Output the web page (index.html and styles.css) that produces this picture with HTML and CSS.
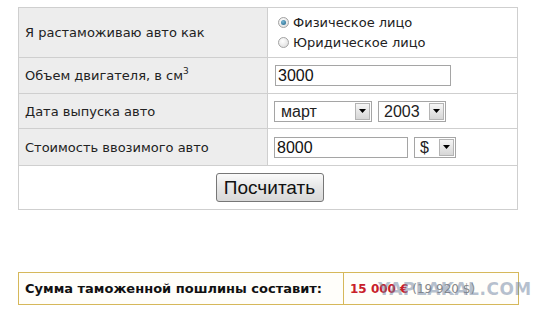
FILE: index.html
```html
<!DOCTYPE html>
<html lang="ru">
<head>
<meta charset="utf-8">
<link rel="stylesheet" href="styles.css">
</head>
<body>
<div class="page">
  <table class="calc">
    <tr class="r1">
      <td class="lbl">Я растаможиваю авто как</td>
      <td class="val">
        <div class="radio-row"><span class="radio on"></span><span>Физическое лицо</span></div>
        <div class="radio-row"><span class="radio"></span><span>Юридическое лицо</span></div>
      </td>
    </tr>
    <tr class="r2">
      <td class="lbl">Объем двигателя, в см<sup>3</sup></td>
      <td class="val"><div class="field volume">3000</div></td>
    </tr>
    <tr class="r3">
      <td class="lbl">Дата выпуска авто</td>
      <td class="val">
        <div class="inline">
          <div class="select month"><span class="sel-text">март</span><span class="arrow"><svg width="7" height="4" viewBox="0 0 7 4"><path d="M0 0h7L3.5 4z" fill="#000"/></svg></span></div>
          <div class="select year"><span class="sel-text">2003</span><span class="arrow"><svg width="7" height="4" viewBox="0 0 7 4"><path d="M0 0h7L3.5 4z" fill="#000"/></svg></span></div>
        </div>
      </td>
    </tr>
    <tr class="r4">
      <td class="lbl">Стоимость ввозимого авто</td>
      <td class="val">
        <div class="inline">
          <div class="field price">8000</div>
          <div class="select cur"><span class="sel-text">$</span><span class="arrow"><svg width="7" height="4" viewBox="0 0 7 4"><path d="M0 0h7L3.5 4z" fill="#000"/></svg></span></div>
        </div>
      </td>
    </tr>
    <tr class="r5">
      <td class="submit" colspan="2"><button class="btn">Посчитать</button></td>
    </tr>
  </table>

  <table class="result">
    <tr>
      <td class="res-lbl">Сумма таможенной пошлины составит:</td>
      <td class="res-val"><span class="eur">15 000 €</span> <span class="usd">(19 920 $)</span><span class="wm">YAPLAKAL.COM</span></td>
    </tr>
  </table>
</div>
</body>
</html>
```
FILE: styles.css
```css
html, body { margin: 0; padding: 0; background: #fff; }
.page { padding: 7px 0 0 18px; font-family: "DejaVu Sans", Verdana, sans-serif; font-size: 13px; color: #222; }

.calc { border-collapse: collapse; width: 500px; }
.calc td { border: 1px solid #cfcfcf; padding: 0; }
.calc .lbl { width: 242px; background: #ededed; padding-left: 6px; color: #222; }
.calc .val { padding-left: 6px; background: #fff; }
.r1 { height: 50px; }
.r2 { height: 36px; }
.r3 { height: 35px; }
.r4 { height: 37px; }
.r5 { height: 44px; }
sup { font-size: 9px; line-height: 0; vertical-align: 6px; }

.radio-row { display: flex; align-items: center; gap: 4px; height: 20px; padding-left: 4px; }
.radio { width: 11px; height: 11px; border-radius: 50%; box-sizing: border-box; border: 1px solid #a4a4a4;
  background: radial-gradient(circle at 40% 35%, #fff 0%, #e4e4e4 70%, #cfcfcf 100%); position: relative; }
.radio.on::after { content: ""; position: absolute; left: 2px; top: 2px; width: 5px; height: 5px; border-radius: 50%;
  background: radial-gradient(circle at 40% 35%, #7ab8d6, #1a5f84); }

.field { box-sizing: border-box; height: 21px; border: 1px solid #a5a5a5; background: #fff;
  font-family: "Liberation Sans", Arial, sans-serif; font-size: 16px; line-height: 19px; padding-left: 2px; color: #111; }
.volume { width: 176px; margin-left: 1px; }
.price { width: 134px; }
.inline { display: flex; align-items: center; gap: 6px; }

.select { box-sizing: border-box; height: 21px; border: 1px solid #a5a5a5; background: #fff; display: flex;
  align-items: stretch; font-family: "Liberation Sans", Arial, sans-serif; font-size: 16px; color: #222; }
.sel-text { flex: 1; padding-left: 5px; line-height: 19px; }
.arrow { width: 15px; margin: 1px; box-sizing: border-box; border: 1px solid #b4b4b4;
  background: linear-gradient(#f6f6f6, #d6d6d6); display: flex; align-items: center; justify-content: center; }
.month { width: 98px; }
.year { width: 68px; }
.cur { width: 42px; }
.month .sel-text { padding-left: 6px; }

.submit { text-align: center; background: #fff; }
.btn { font-family: "Liberation Sans", Arial, sans-serif; font-size: 19px; color: #111; height: 29px; width: 108px;
  border: 1px solid #777; border-radius: 3px; background: linear-gradient(#fafafa, #e6e6e6 50%, #d8d8d8);
  padding: 0; margin-left: 3px; }

.result { border-collapse: collapse; width: 501px; margin-top: 62px; background: #fffefa; }
.result td { border: 1px solid #d6b85a; height: 31px; padding: 0 0 0 6px; }
.res-lbl { width: 318px; font-weight: bold; color: #111; font-size: 13px; }
.res-val { position: relative; font-family: "DejaVu Sans", Verdana, sans-serif; font-size: 12px; white-space: nowrap; }
.eur { color: #c8202a; font-weight: bold; }
.usd { color: #888; }
.wm { position: absolute; left: 34px; top: 6px; font-family: "DejaVu Sans", sans-serif; font-weight: bold; font-size: 17px;
  color: rgba(110, 130, 160, 0.5); letter-spacing: 0.5px; }
```
